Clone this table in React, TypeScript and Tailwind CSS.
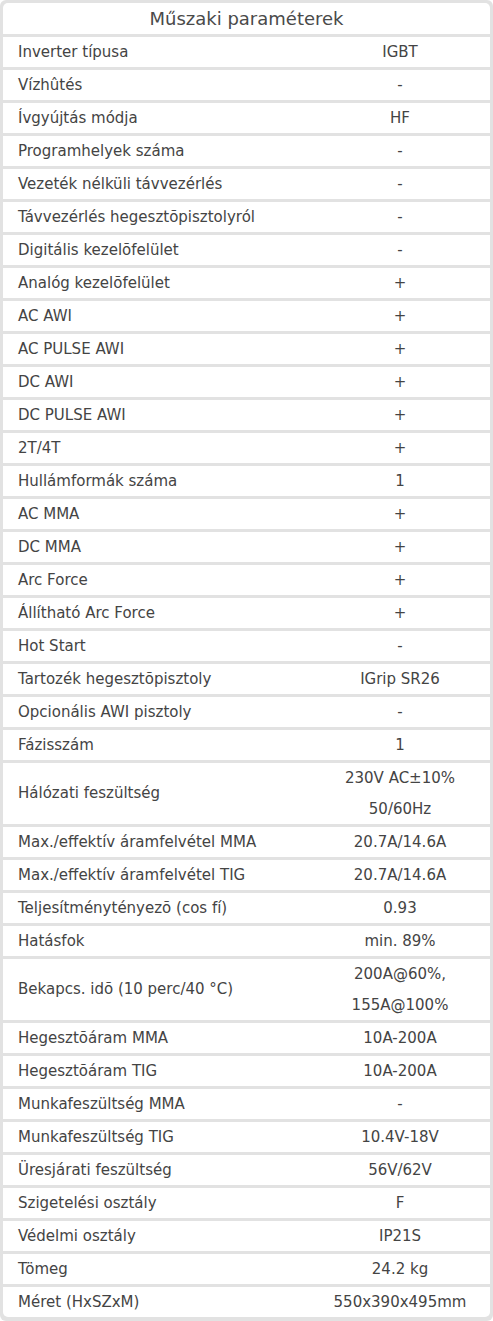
const rows: [string, string | string[]][] = [
  ["Inverter típusa", "IGBT"],
  ["Vízhûtés", "-"],
  ["Ívgyújtás módja", "HF"],
  ["Programhelyek száma", "-"],
  ["Vezeték nélküli távvezérlés", "-"],
  ["Távvezérlés hegesztõpisztolyról", "-"],
  ["Digitális kezelõfelület", "-"],
  ["Analóg kezelõfelület", "+"],
  ["AC AWI", "+"],
  ["AC PULSE AWI", "+"],
  ["DC AWI", "+"],
  ["DC PULSE AWI", "+"],
  ["2T/4T", "+"],
  ["Hullámformák száma", "1"],
  ["AC MMA", "+"],
  ["DC MMA", "+"],
  ["Arc Force", "+"],
  ["Állítható Arc Force", "+"],
  ["Hot Start", "-"],
  ["Tartozék hegesztõpisztoly", "IGrip SR26"],
  ["Opcionális AWI pisztoly", "-"],
  ["Fázisszám", "1"],
  ["Hálózati feszültség", ["230V AC±10%", "50/60Hz"]],
  ["Max./effektív áramfelvétel MMA", "20.7A/14.6A"],
  ["Max./effektív áramfelvétel TIG", "20.7A/14.6A"],
  ["Teljesítménytényezõ (cos fí)", "0.93"],
  ["Hatásfok", "min. 89%"],
  ["Bekapcs. idõ (10 perc/40 °C)", ["200A@60%,", "155A@100%"]],
  ["Hegesztõáram MMA", "10A-200A"],
  ["Hegesztõáram TIG", "10A-200A"],
  ["Munkafeszültség MMA", "-"],
  ["Munkafeszültség TIG", "10.4V-18V"],
  ["Üresjárati feszültség", "56V/62V"],
  ["Szigetelési osztály", "F"],
  ["Védelmi osztály", "IP21S"],
  ["Tömeg", "24.2 kg"],
  ["Méret (HxSZxM)", "550x390x495mm"],
]

export default function App() {
  return (
    <div className="w-[493px] bg-white font-['DejaVu_Sans',Verdana,sans-serif] text-[#444]">
      <div className="flex flex-col gap-[3px] rounded-[6px] bg-[#e2e2e2] px-[3px] pt-[3px] pb-[4px]">
        <div className="flex h-[31px] items-center justify-center rounded-t-[5px] bg-white text-[18px] text-[#4a4a4a]">
          Műszaki paraméterek
        </div>
        {rows.map(([label, value], i) => {
          const last = i === rows.length - 1
          const lines = Array.isArray(value) ? value : [value]
          return (
            <div
              key={label}
              className={`grid grid-cols-[1fr_180px] bg-white text-[15px] ${last ? "rounded-b-[5px]" : ""}`}
            >
              <div className="flex items-center pl-[15px]">{label}</div>
              <div className="flex flex-col">
                {lines.map((line, j) => (
                  <div
                    key={j}
                    className={`flex items-center justify-center ${lines.length > 1 ? "h-[30.5px]" : "h-[30px]"}`}
                  >
                    {line}
                  </div>
                ))}
              </div>
            </div>
          )
        })}
      </div>
    </div>
  )
}
